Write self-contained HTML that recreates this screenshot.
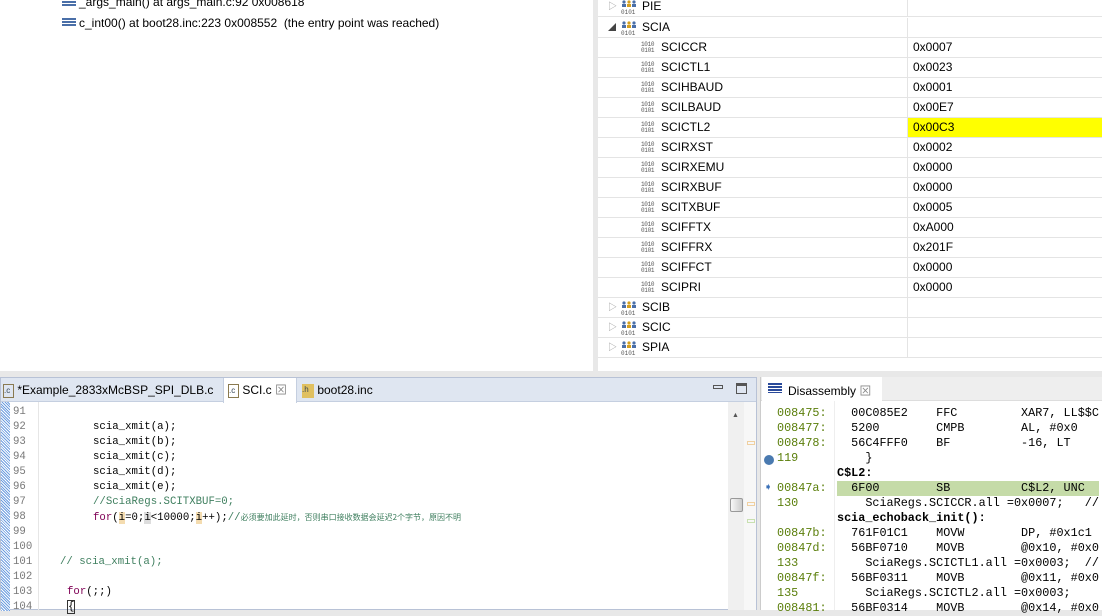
<!DOCTYPE html>
<html><head><meta charset="utf-8"><style>
*{margin:0;padding:0;box-sizing:border-box}
body{width:1102px;height:610px;overflow:hidden;background:#e8e8e8;font-family:"Liberation Sans","Noto Sans CJK SC",sans-serif;font-size:12px;color:#000;position:relative}
.abs{position:absolute}
.dbg{left:0;top:0;width:593px;height:371px;background:#fff}
.fr{position:absolute;left:62px;width:14px;height:11px}
.fr i{display:block;height:2px;background:#4a6fa8;margin-bottom:1px}
.reg{left:598px;top:0;width:504px;height:371px;background:#fff}
.row{position:absolute;left:0;width:504px;height:20px;border-bottom:1px solid #e4e4e4;line-height:19px}
.row .v{position:absolute;left:309px;top:0;width:195px;height:19px;padding-left:5px;border-left:1px solid #e4e4e4}
.bi{position:absolute;font-size:6px;line-height:6px;color:#555;font-family:"Liberation Mono",monospace;letter-spacing:-0.3px}
.gi{position:absolute;left:23px;top:2px;width:16px;height:16px}
.tri{position:absolute;left:10px;top:0;color:#999;font-size:9px}
.ed{left:0;top:377px;width:757px;height:233px;background:#fff;border:1px solid #b8c2d6}
.tabs{position:absolute;left:0;top:0;width:755px;height:24px;background:#dfe6f1;border-bottom:1px solid #c5cfe0}
.tab{position:absolute;top:0;height:24px;line-height:24px;font-size:12px}
.code{font-family:"Liberation Mono",monospace;font-size:10.7px;white-space:pre;position:absolute;line-height:15px}
.ln{color:#787878}
.kw{color:#7f0055}
.cm{color:#3f7f5f}
.das{left:760px;top:377px;width:342px;height:233px;background:#fff;border-left:1px solid #ccc}
.dc{font-family:"Liberation Mono",monospace;font-size:11.8px;white-space:pre;position:absolute;line-height:15px;color:#000}
.ad{color:#5a7e0a}
</style></head><body>

<div class="abs dbg">
  <div class="fr" style="top:-2px"><i></i><i></i><i></i></div>
  <div class="abs" style="left:79px;top:-5px;font-size:12px">_args_main() at args_main.c:92 0x008618</div>
  <div class="fr" style="top:18px"><i></i><i></i><i></i></div>
  <div class="abs" style="left:79px;top:16px;font-size:12px">c_int00() at boot28.inc:223 0x008552&nbsp; (the entry point was reached)</div>
</div>

<div class="abs reg">
<div class="row" style="top:-3px"><span class="tri">▷</span><svg class="gi" viewBox="0 0 16 16"><circle cx="3" cy="3" r="1.6" fill="#4a6fa8"/><circle cx="8" cy="3" r="1.6" fill="#d4a020"/><circle cx="13" cy="3" r="1.6" fill="#4a6fa8"/><rect x="1" y="5" width="4" height="3" fill="#4a6fa8"/><rect x="6" y="5" width="4" height="3" fill="#d4a020"/><rect x="11" y="5" width="4" height="3" fill="#4a6fa8"/><text x="0" y="15" font-size="6" font-family="Liberation Mono" fill="#555">0101</text></svg><span style="position:absolute;left:44px">PIE</span><div class="v"></div></div>
<div class="row" style="top:18px"><span class="tri" style="color:#444;font-size:8px">◢</span><svg class="gi" viewBox="0 0 16 16"><circle cx="3" cy="3" r="1.6" fill="#4a6fa8"/><circle cx="8" cy="3" r="1.6" fill="#d4a020"/><circle cx="13" cy="3" r="1.6" fill="#4a6fa8"/><rect x="1" y="5" width="4" height="3" fill="#4a6fa8"/><rect x="6" y="5" width="4" height="3" fill="#d4a020"/><rect x="11" y="5" width="4" height="3" fill="#4a6fa8"/><text x="0" y="15" font-size="6" font-family="Liberation Mono" fill="#555">0101</text></svg><span style="position:absolute;left:44px">SCIA</span><div class="v"></div></div>
</div>

<div class="abs" id="regs" style="left:598px;top:0"></div>

<div class="abs ed">
 <div class="tabs">
  <div class="tab" style="left:2px"><span style="display:inline-block;width:11px;height:14px;border:1px solid #8a7a50;font-size:8px;line-height:12px;vertical-align:middle;color:#345">.c</span> *Example_2833xMcBSP_SPI_DLB.c</div>
  <div class="tab" style="left:222px;width:74px;background:#fff;border-left:1px solid #c5cfe0;border-right:1px solid #c5cfe0;padding-left:4px;height:25px"><span style="display:inline-block;width:11px;height:14px;border:1px solid #8a7a50;font-size:8px;line-height:12px;vertical-align:middle;color:#345">.c</span> SCI.c <span style="color:#888">⊠</span></div>
  <div class="tab" style="left:301px"><span style="display:inline-block;width:12px;height:14px;background:#e0c060;font-size:8px;line-height:12px;vertical-align:middle;color:#345">.h</span> boot28.inc</div>
  <div class="abs" style="left:712px;top:7px;width:10px;height:4px;border:1px solid #555"></div>
  <div class="abs" style="left:735px;top:5px;width:11px;height:11px;border:1px solid #555;border-top-width:3px"></div>
 </div>
 <div class="abs" style="left:0;top:24px;width:9px;height:209px;background:repeating-linear-gradient(45deg,#6e9ee0 0 1px,#fff 1px 2px)"></div>
 <div class="abs" style="left:37px;top:24px;width:1px;height:209px;background:#e6e6e6"></div>
 <div class="code ln" style="left:12px;top:27px">91
92
93
94
95
96
97
98
99
100
101
102
103
104</div>
 <div class="code" style="left:92px;top:27px">
scia_xmit(a);
scia_xmit(b);
scia_xmit(c);
scia_xmit(d);
scia_xmit(e);
<span class="cm">//SciaRegs.SCITXBUF=0;</span>
<span class="kw">for</span>(<span style="background:#f4dcb0">i</span>=0;<span style="background:#ddd">i</span>&lt;10000;<span style="background:#f4dcb0">i</span>++);<span class="cm">//<span style="font-family:'Noto Sans CJK SC',sans-serif;font-size:8px">必须要加此延时，否则串口接收数据会延迟2个字节，原因不明</span></span></div>
 <div class="code cm" style="left:59px;top:177px">// scia_xmit(a);</div>
 <div class="code" style="left:66px;top:207px"><span class="kw">for</span>(;;)
<span style="border:1px solid #333">{</span></div>
 <div class="abs" style="left:727px;top:24px;width:16px;height:208px;background:#f0f0f0"></div>
 <div class="abs" style="left:731px;top:34px;color:#555;font-size:7px">▲</div>
 <div class="abs" style="left:729px;top:120px;width:13px;height:14px;border:1px solid #999;border-radius:2px;background:linear-gradient(90deg,#f8f8f8,#ccc)"></div>
 <div class="abs" style="left:743px;top:24px;width:12px;height:208px;background:#f7f7f7"></div>
 <div class="abs" style="left:746px;top:63px;width:8px;height:4px;border:1px solid #f0d0a0"></div>
 <div class="abs" style="left:746px;top:124px;width:8px;height:4px;border:1px solid #f0d0a0"></div>
 <div class="abs" style="left:746px;top:141px;width:8px;height:4px;border:1px solid #c8e0b0"></div>
</div>

<div class="abs das">
 <div class="abs" style="left:0;top:0;width:342px;height:24px;background:#eeeeee;border-bottom:1px solid #ddd"></div>
 <div class="abs" style="left:1px;top:0;width:120px;height:25px;background:#fff"></div>
 <div class="abs" style="left:7px;top:6px;width:14px;height:10px;background:repeating-linear-gradient(#2a4a9a 0 2px,#fff 2px 3px)"></div>
 <div class="abs" style="left:27px;top:5px;font-size:12px">Disassembly <span style="color:#888">⊠</span></div>
 <div class="abs" style="left:73px;top:24px;width:1px;height:209px;background:#eee"></div>
 <div class="abs" style="left:76px;top:104px;width:262px;height:15px;background:#c5dba8"></div>
 <div class="abs" style="left:3px;top:78px;width:10px;height:10px;border-radius:50%;background:#4a7ab0"></div>
 <div class="abs" style="left:3px;top:105px;color:#3a70b8;font-size:10px">➧</div>
 <div class="dc" style="left:16px;top:29px"><span class="ad">008475:
008477:
008478:
119

00847a:
130

00847b:
00847d:
133
00847f:
135
008481:</span></div>
 <div class="dc" style="left:76px;top:29px">  00C085E2    FFC         XAR7, LL$$C
  5200        CMPB        AL, #0x0
  56C4FFF0    BF          -16, LT
    }
<b>C$L2:</b>
  6F00        SB          C$L2, UNC
    SciaRegs.SCICCR.all =0x0007;   //
<b>scia_echoback_init():</b>
  761F01C1    MOVW        DP, #0x1c1
  56BF0710    MOVB        @0x10, #0x0
    SciaRegs.SCICTL1.all =0x0003;  //
  56BF0311    MOVB        @0x11, #0x0
    SciaRegs.SCICTL2.all =0x0003;
  56BF0314    MOVB        @0x14, #0x0</div>
</div>

<script>
var names=["SCICCR","SCICTL1","SCIHBAUD","SCILBAUD","SCICTL2","SCIRXST","SCIRXEMU","SCIRXBUF","SCITXBUF","SCIFFTX","SCIFFRX","SCIFFCT","SCIPRI"];
var vals=["0x0007","0x0023","0x0001","0x00E7","0x00C3","0x0002","0x0000","0x0000","0x0005","0xA000","0x201F","0x0000","0x0000"];
var h="",grp='<svg class="gi" viewBox="0 0 16 16"><circle cx="3" cy="3" r="1.6" fill="#4a6fa8"/><circle cx="8" cy="3" r="1.6" fill="#d4a020"/><circle cx="13" cy="3" r="1.6" fill="#4a6fa8"/><rect x="1" y="5" width="4" height="3" fill="#4a6fa8"/><rect x="6" y="5" width="4" height="3" fill="#d4a020"/><rect x="11" y="5" width="4" height="3" fill="#4a6fa8"/><text x="0" y="15" font-size="6" font-family="Liberation Mono" fill="#555">0101</text></svg>';
for(var i=0;i<13;i++){var t=38+20*i;var hl=i==4?"background:#ffff00;":"";
h+='<div class="row" style="top:'+t+'px"><div class="bi" style="left:43px;top:4px">1010<br>0101</div><span style="position:absolute;left:63px">'+names[i]+'</span><div class="v" style="'+hl+'">'+vals[i]+'</div></div>';}
var g=["SCIB","SCIC","SPIA"];
for(var j=0;j<3;j++){var t=298+20*j;h+='<div class="row" style="top:'+t+'px"><span class="tri">▷</span>'+grp+'<span style="position:absolute;left:44px">'+g[j]+'</span><div class="v"></div></div>';}
document.getElementById("regs").innerHTML=h;
</script>
</body></html>
